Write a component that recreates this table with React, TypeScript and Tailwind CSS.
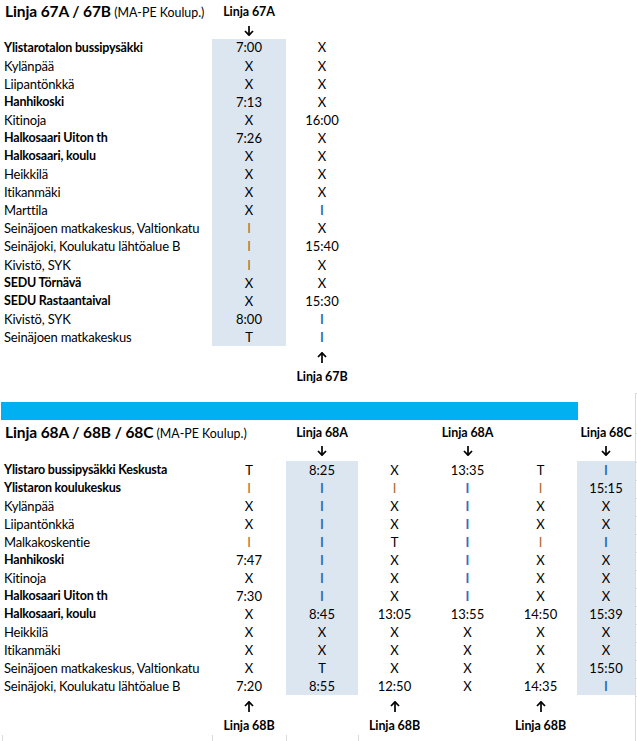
import React from "react";

type Row = { name: string; bold?: boolean; v: string[] };

const r67: Row[] = [
  { name: "Ylistarotalon bussipysäkki", bold: true, v: ["7:00", "X"] },
  { name: "Kylänpää", v: ["X", "X"] },
  { name: "Liipantönkkä", v: ["X", "X"] },
  { name: "Hanhikoski", bold: true, v: ["7:13", "X"] },
  { name: "Kitinoja", v: ["X", "16:00"] },
  { name: "Halkosaari Uiton th", bold: true, v: ["7:26", "X"] },
  { name: "Halkosaari, koulu", bold: true, v: ["X", "X"] },
  { name: "Heikkilä", v: ["X", "X"] },
  { name: "Itikanmäki", v: ["X", "X"] },
  { name: "Marttila", v: ["X", "|"] },
  { name: "Seinäjoen matkakeskus, Valtionkatu", v: ["I", "X"] },
  { name: "Seinäjoki, Koulukatu lähtöalue B", v: ["I", "15:40"] },
  { name: "Kivistö, SYK", v: ["I", "X"] },
  { name: "SEDU Törnävä", bold: true, v: ["X", "X"] },
  { name: "SEDU Rastaantaival", bold: true, v: ["X", "15:30"] },
  { name: "Kivistö, SYK", v: ["8:00", "|"] },
  { name: "Seinäjoen matkakeskus", v: ["T", "|"] },
];

const r68: Row[] = [
  { name: "Ylistaro bussipysäkki Keskusta", bold: true, v: ["T", "8:25", "X", "13:35", "T", "|"] },
  { name: "Ylistaron koulukeskus", bold: true, v: ["I", "|", "I", "|", "I", "15:15"] },
  { name: "Kylänpää", v: ["X", "|", "X", "|", "X", "X"] },
  { name: "Liipantönkkä", v: ["X", "|", "X", "|", "X", "X"] },
  { name: "Malkakoskentie", v: ["I", "|", "T", "|", "I", "|"] },
  { name: "Hanhikoski", bold: true, v: ["7:47", "|", "X", "|", "X", "X"] },
  { name: "Kitinoja", v: ["X", "|", "X", "|", "X", "X"] },
  { name: "Halkosaari Uiton th", bold: true, v: ["7:30", "|", "X", "|", "X", "X"] },
  { name: "Halkosaari, koulu", bold: true, v: ["X", "8:45", "13:05", "13:55", "14:50", "15:39"] },
  { name: "Heikkilä", v: ["X", "X", "X", "X", "X", "X"] },
  { name: "Itikanmäki", v: ["X", "X", "X", "X", "X", "X"] },
  { name: "Seinäjoen matkakeskus, Valtionkatu", v: ["X", "T", "X", "X", "X", "15:50"] },
  { name: "Seinäjoki, Koulukatu lähtöalue B", v: ["7:20", "8:55", "12:50", "X", "14:35", "|"] },
];

function Val({ v }: { v: string }) {
  if (v === "|") return <span className="text-[#2f6fbe] font-bold">I</span>;
  if (v === "I") return <span className="text-[#a8692c]">I</span>;
  return <>{v}</>;
}

function Down() {
  return (
    <svg width="10" height="10" viewBox="0 0 10 10" fill="none" stroke="#000" strokeWidth="1.7">
      <path d="M5 0 V9" />
      <path d="M1 5 L5 9.2 L9 5" />
    </svg>
  );
}

function Up() {
  return (
    <svg width="10" height="11" viewBox="0 0 10 11" fill="none" stroke="#000" strokeWidth="1.7">
      <path d="M5 11 V1" />
      <path d="M1 5 L5 0.8 L9 5" />
    </svg>
  );
}

const cols67 = "grid grid-cols-[212px_74px_72px]";
const cols68 = "grid grid-cols-[212px_74px_72px_73px_73px_73px_58px]";
const blue68 = [false, true, false, false, false, true];
const hdr = "text-center font-bold text-[12.5px] tracking-[-0.1px] whitespace-nowrap";

export default function App() {
  return (
    <div className="w-[637px] h-[741px] bg-white overflow-hidden flex text-black font-[Lato,sans-serif] text-[13px] leading-none">
      <div className="w-[635px] flex flex-col">
        {/* Section 67 */}
        <div className={`${cols67} h-[24px] items-center`}>
          <div className="pl-[5px] whitespace-nowrap">
            <span className="font-bold text-[15.5px] tracking-[-0.1px]">Linja 67A / 67B</span>
            <span className="text-[12.4px]"> (MA-PE Koulup.)</span>
          </div>
          <div className={hdr}>Linja 67A</div>
          <div />
        </div>
        <div className={`${cols67} h-[15px] items-center`}>
          <div />
          <div className="flex justify-center">
            <Down />
          </div>
          <div />
        </div>
        <div className={cols67}>
          {r67.map((r, i) => (
            <React.Fragment key={i}>
              <div
                className={`h-[18.1px] flex items-center pl-[4px] whitespace-nowrap ${
                  r.bold ? "font-bold text-[12.5px] tracking-[-0.2px]" : "tracking-[-0.2px]"
                }`}
              >
                {r.name}
              </div>
              <div className="h-[18.1px] flex items-center justify-center bg-[#dce6f1]">
                <Val v={r.v[0]} />
              </div>
              <div className="h-[18.1px] flex items-center justify-center">
                <Val v={r.v[1]} />
              </div>
            </React.Fragment>
          ))}
        </div>
        <div className={`${cols67} h-[22px] items-center`}>
          <div />
          <div />
          <div className="flex justify-center">
            <Up />
          </div>
        </div>
        <div className={`${cols67} h-[18px] items-center`}>
          <div />
          <div />
          <div className={hdr}>Linja 67B</div>
        </div>
        <div className="h-[16px]" />
        <div className="h-[18px] w-[577px] ml-[1px] bg-[#00b0f0]" />

        {/* Section 68 */}
        <div className={`${cols68} h-[26px] items-center`}>
          <div className="pl-[5px] whitespace-nowrap">
            <span className="font-bold text-[15.5px] tracking-[-0.1px]">Linja 68A / 68B / 68C</span>
            <span className="text-[12.4px]"> (MA-PE Koulup.)</span>
          </div>
          <div />
          <div className={hdr}>Linja 68A</div>
          <div />
          <div className={hdr}>Linja 68A</div>
          <div />
          <div className={hdr}>Linja 68C</div>
        </div>
        <div className={`${cols68} h-[15px] items-start`}>
          <div />
          <div />
          <div className="flex justify-center">
            <Down />
          </div>
          <div />
          <div className="flex justify-center">
            <Down />
          </div>
          <div />
          <div className="flex justify-center">
            <Down />
          </div>
        </div>
        <div className={cols68}>
          {r68.map((r, i) => (
            <React.Fragment key={i}>
              <div
                className={`h-[18px] flex items-center pl-[4px] whitespace-nowrap ${
                  r.bold ? "font-bold text-[12.5px] tracking-[-0.2px]" : "tracking-[-0.2px]"
                }`}
              >
                {r.name}
              </div>
              {r.v.map((v, j) => (
                <div key={j} className={`h-[18px] flex items-center justify-center ${blue68[j] ? "bg-[#dce6f1]" : ""}`}>
                  <Val v={v} />
                </div>
              ))}
            </React.Fragment>
          ))}
        </div>
        <div className={`${cols68} h-[22px] items-center`}>
          <div />
          <div className="flex justify-center">
            <Up />
          </div>
          <div />
          <div className="flex justify-center">
            <Up />
          </div>
          <div />
          <div className="flex justify-center">
            <Up />
          </div>
          <div />
        </div>
        <div className={`${cols68} h-[18px] items-center`}>
          <div />
          <div className={hdr}>Linja 68B</div>
          <div />
          <div className={hdr}>Linja 68B</div>
          <div />
          <div className={hdr}>Linja 68B</div>
          <div />
        </div>
        <div className="flex h-[6px]">
          <div className="w-[2px]" />
          <div className="w-[210px] border-l border-[#dadada]" />
          <div className="w-[74px] border-l border-[#dadada]" />
          <div className="w-[72px] border-l border-[#dadada]" />
          <div className="w-[73px] border-l border-[#dadada]" />
          <div className="w-[204px]" />
        </div>
      </div>
      <div className="w-[2px] flex flex-col">
        <div className="h-[393px]" />
        <div className="h-[40px] border-l border-t border-[#dadada]" />
        <div className="h-[29px] border-l border-t border-[#dadada]" />
        {r68.map((_, i) => (
          <div key={i} className="h-[18px] border-l border-t border-[#dadada]" />
        ))}
        <div className="flex-1 border-l border-t border-[#dadada]" />
      </div>
    </div>
  );
}
